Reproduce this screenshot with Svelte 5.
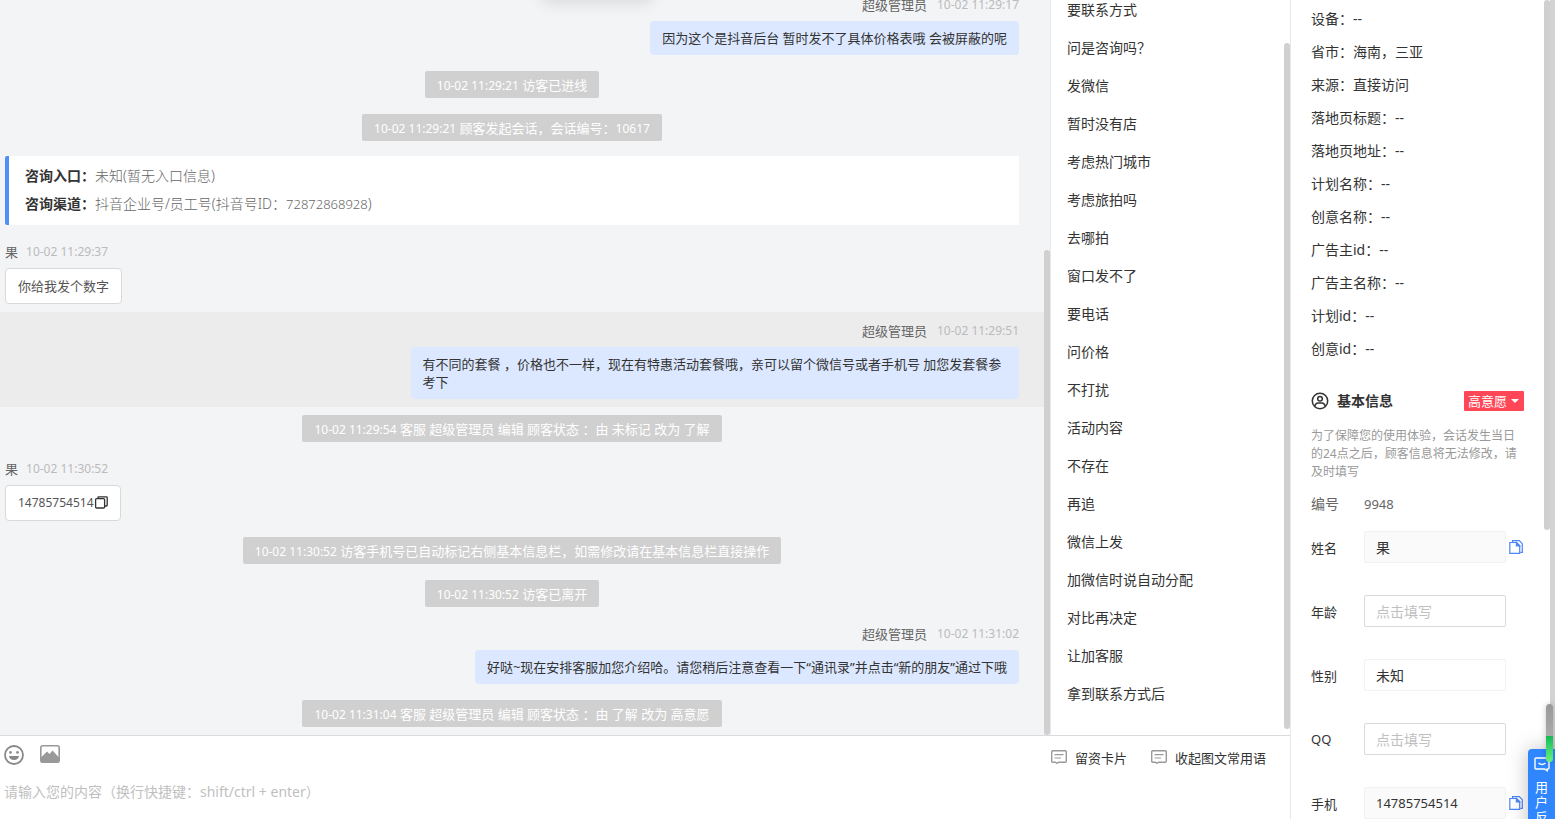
<script>
    const messages = [
        {type: 'service', name: '超级管理员', time: '10-02 11:29:17', text: '因为这个是抖音后台 暂时发不了具体价格表哦 会被屏蔽的呢'},
        {type: 'tip', time: '10-02 11:29:21', text: '访客已进线'},
        {type: 'tip', time: '10-02 11:29:21', text: '顾客发起会话，会话编号：', num: '10617'},
        {type: 'entry'},
        {type: 'visitor', name: '果', time: '10-02 11:29:37', text: '你给我发个数字'},
        {type: 'service', name: '超级管理员', time: '10-02 11:29:51', text: '有不同的套餐 ，价格也不一样，现在有特惠活动套餐哦，亲可以留个微信号或者手机号 加您发套餐参考下', active: true},
        {type: 'tip', time: '10-02 11:29:54', text: '客服 超级管理员 编辑 顾客状态 ：由 未标记 改为 了解'},
        {type: 'visitor', name: '果', time: '10-02 11:30:52', phone: '14785754514'},
        {type: 'tip', time: '10-02 11:30:52', text: '访客手机号已自动标记右侧基本信息栏，如需修改请在基本信息栏直接操作'},
        {type: 'tip', time: '10-02 11:30:52', text: '访客已离开'},
        {type: 'service', name: '超级管理员', time: '10-02 11:31:02', text: '好哒~现在安排客服加您介绍哈。请您稍后注意查看一下“通讯录”并点击“新的朋友”通过下哦'},
        {type: 'tip', time: '10-02 11:31:04', text: '客服 超级管理员 编辑 顾客状态 ：由 了解 改为 高意愿'}
    ];

    const phrases = [
        '要联系方式', '问是咨询吗？', '发微信', '暂时没有店', '考虑热门城市', '考虑旅拍吗', '去哪拍',
        '窗口发不了', '要电话', '问价格', '不打扰', '活动内容', '不存在', '再追', '微信上发',
        '加微信时说自动分配', '对比再决定', '让加客服', '拿到联系方式后'
    ];

    const details = [
        ['设备', '--'],
        ['省市', '海南，三亚'],
        ['来源', '直接访问'],
        ['落地页标题', '--'],
        ['落地页地址', '--'],
        ['计划名称', '--'],
        ['创意名称', '--'],
        ['广告主id', '--'],
        ['广告主名称', '--'],
        ['计划id', '--'],
        ['创意id', '--']
    ];

    let draft = $state('');
    let fields = $state([
        {id: 'name', label: '姓名', value: '果', filled: true},
        {id: 'age', label: '年龄', value: ''},
        {id: 'gender', label: '性别', value: '未知', options: ['未知', '男', '女']},
        {id: 'qq', label: 'QQ', value: ''},
        {id: 'phone', label: '手机', value: '14785754514', filled: true}
    ]);
</script>

{#snippet cardIcon()}
    <svg width="16" height="14" viewBox="0 0 16 14" fill="none" stroke="#999" stroke-width="1.4">
        <path d="M1.7.8h12.6q1 0 1 1v9.4q0 1-1 1H7.6L6 13.3l-1.6-1.1H1.7q-1 0-1-1V1.8q0-1 1-1z" />
        <path d="M3.5 4.7h9M3.5 8h6.500" stroke-width="1.2" />
    </svg>
{/snippet}

<div class="page">
    <main class="workspace">
        <div class="upper">
            <section class="chat">
                <div class="dropped"></div>
                {#each messages as msg}
                    <div class="item {msg.type}" class:active={msg.active}>
                        {#if msg.type === 'tip'}
                            <div class="pill"><span class="num">{msg.time}</span> {msg.text}<span class="num">{msg.num ?? ''}</span></div>
                        {:else if msg.type === 'entry'}
                            <div class="card">
                                <p><b>咨询入口：</b>未知(暂无入口信息)</p>
                                <p><b>咨询渠道：</b>抖音企业号/员工号(抖音号ID：<span class="id">72872868928</span>)</p>
                            </div>
                        {:else}
                            <div class="meta"><span>{msg.name}</span><time class="num">{msg.time}</time></div>
                            <div class="bubble">
                                {#if msg.phone}
                                    <span class="num">{msg.phone}</span><button class="copy" aria-label="复制">
                                        <svg width="14" height="14" viewBox="0 0 14 14" fill="none" stroke="#333" stroke-width="1.3">
                                            <rect x="1.6" y="2.6" width="9" height="9.4" rx="1" />
                                            <path d="M4 2.500V1.400q0-.6.6-.6h7.800q.8 0 .8.8v7.600q0 .8-.8.8h-1.600" />
                                        </svg>
                                    </button>
                                {:else}
                                    {msg.text}
                                {/if}
                            </div>
                        {/if}
                    </div>
                {/each}
                <div class="thumb chat-thumb"></div>
            </section>

            <section class="phrases">
                <ul>
                    {#each phrases as phrase}
                        <li><button>{phrase}</button></li>
                    {/each}
                </ul>
                <div class="thumb phrase-thumb"></div>
            </section>
        </div>

        <div class="composer">
            <div class="toolbar">
                <div class="tools">
                    <button aria-label="表情">
                        <svg width="20" height="20" viewBox="0 0 20 20">
                            <circle cx="10" cy="10" r="9" fill="none" stroke="#888" stroke-width="1.8" />
                            <circle cx="6.5" cy="7.4" r="1.3" fill="#888" />
                            <circle cx="13.5" cy="7.4" r="1.3" fill="#888" />
                            <path d="M5 11h10q-.6 4-5 4t-5-4z" fill="#888" />
                        </svg>
                    </button>
                    <button aria-label="图片">
                        <svg width="20" height="20" viewBox="0 0 20 20">
                            <rect x=".8" y=".8" width="18.400" height="16.400" rx="2" fill="none" stroke="#999" stroke-width="1.6" />
                            <path d="M1 12.500l6-6 2.500 2.500L12.500 5.500 19 12.500V17H1z" fill="#999" />
                        </svg>
                    </button>
                </div>
                <div class="actions">
                    <button>{@render cardIcon()}留资卡片</button>
                    <button>{@render cardIcon()}收起图文常用语</button>
                </div>
            </div>
            <textarea bind:value={draft} aria-label="消息" placeholder="请输入您的内容（换行快捷键：shift/ctrl + enter）"></textarea>
        </div>
    </main>

    <aside class="info">
        <ul class="details">
            {#each details as [label, value]}
                <li>{label}：{value}</li>
            {/each}
        </ul>

        <header>
            <svg width="18" height="18" viewBox="0 0 18 18" fill="none" stroke="#333" stroke-width="1.5">
                <circle cx="9" cy="9" r="7.7" />
                <circle cx="9" cy="6.8" r="2.3" />
                <path d="M3.6 14.2q1.2-3.2 3.4-3.2h4q2.2 0 3.4 3.2" />
            </svg>
            <h2>基本信息</h2>
            <button class="level">高意愿<i></i></button>
        </header>
        <p class="note">为了保障您的使用体验，会话发生当日的24点之后，顾客信息将无法修改，请及时填写</p>
        <div class="number"><span>编号</span><span class="id">9948</span></div>

        <form>
            {#each fields as field}
                <div class="field">
                    <label for={field.id}>{field.label}</label>
                    {#if field.options}
                        <select id={field.id} bind:value={field.value}>
                            {#each field.options as option}
                                <option>{option}</option>
                            {/each}
                        </select>
                    {:else}
                        <input id={field.id} class:filled={field.filled} bind:value={field.value} placeholder="点击填写" />
                    {/if}
                    {#if field.filled}
                        <button type="button" class="copy" aria-label="复制{field.label}">
                            <svg width="14" height="14" viewBox="0 0 14 14" fill="none" stroke="#4a86f7" stroke-width="1.2">
                                <path d="M3.5 2.3V.7h6.800l3 3v8.600h-2" />
                                <path d="M.8 2.5h6.700l3.200 3.200v7.600H.8z" />
                                <path d="M7.4 2.5v3.300h3.300z" fill="#4a86f7" />
                            </svg>
                        </button>
                    {/if}
                </div>
            {/each}
        </form>
        <div class="thumb info-thumb"></div>
        <div class="rail"></div>
    </aside>

    <button class="feedback">
        <svg width="16" height="15" viewBox="0 0 16 15" fill="none" stroke="#fff" stroke-width="1.4">
            <path d="M2 1h12q1 0 1 1v9q0 1-1 1h-.8v1.800L10.500 12H2q-1 0-1-1V2q0-1 1-1z" />
            <path d="M4.500 6q3.500 3.200 7 0" />
        </svg>
        <span>用户反馈</span>
    </button>
    <div class="meter"></div>
</div>

<style>
    :global(body) {
        overflow: hidden;
        font-family: "Noto Sans", "Noto Sans CJK SC", sans-serif;
        font-size: 14px;
        color: #333;
    }
    .page {
        display: flex;
        position: relative;
        height: 100vh;
        overflow: hidden;
        background: #fff;
    }
    ul, p, h2 {
        margin: 0;
        padding: 0;
        list-style: none;
    }
    button {
        padding: 0;
        border: 0;
        background: none;
        font: inherit;
        color: inherit;
        cursor: pointer;
    }
    svg {
        display: block;
        flex: none;
    }
    .workspace {
        display: flex;
        flex: 1;
        flex-direction: column;
        min-width: 0;
    }
    .upper {
        display: flex;
        flex: 1;
        min-height: 0;
    }
    .thumb {
        position: absolute;
        right: 0;
        width: 6px;
        border-radius: 3px;
        background: #d0d0d0;
    }

    /* conversation */
    .chat {
        display: flex;
        flex: 1;
        flex-direction: column;
        justify-content: flex-end;
        position: relative;
        overflow: hidden;
        background: #f3f4f6;
        font-size: 13px;
        line-height: 18px;
    }
    .dropped {
        position: absolute;
        top: -40px;
        left: 50%;
        width: 110px;
        height: 40px;
        margin-left: 17px;
        box-shadow: 0 2px 16px rgba(0, 0, 0, 0.12);
    }
    .chat-thumb {
        top: 34%;
        bottom: 0;
    }
    .item {
        display: flex;
        flex: none;
        flex-direction: column;
        align-items: flex-start;
        padding: 8px 31px 8px 5px;
    }
    .service {
        align-items: flex-end;
    }
    .tip {
        align-items: center;
    }
    .entry {
        align-items: stretch;
        padding-top: 7px;
    }
    .active {
        background: #ececec;
    }
    .num {
        font-size: 12px;
    }
    .id {
        font-size: 13px;
    }
    .pill {
        padding: 5px 12px 4px;
        border-radius: 2px;
        background: #d0d0d0;
        color: #fff;
    }
    .pill .num {
        line-height: 1;
    }
    .card {
        padding: 6px 16px 7px;
        border-left: 4px solid #4f8ff9;
        border-radius: 2px 0 0 2px;
        background: #fff;
        color: #666;
        font-size: 14px;
        font-weight: 300;
        line-height: 28px;
    }
    .card .id {
        line-height: 1;
    }
    .card b {
        color: #333;
        font-weight: 700;
    }
    .meta {
        display: flex;
        gap: 10px;
        margin-bottom: 5px;
        color: #666;
        line-height: 22px;
    }
    .visitor .meta {
        gap: 8px;
    }
    .meta time {
        color: #bbb;
    }
    .bubble {
        display: flex;
        align-items: center;
        box-sizing: border-box;
        max-width: 60%;
        padding: 8px 12px;
        border-radius: 4px;
        background: #dce8ff;
    }
    .visitor .bubble {
        border: 1px solid #d9d9d9;
        background: #fff;
        color: #555;
    }

    /* quick phrases */
    .phrases {
        display: flex;
        flex: none;
        flex-direction: column;
        justify-content: flex-end;
        position: relative;
        box-sizing: border-box;
        width: 240px;
        padding: 0 16px 22px;
        overflow: hidden;
        border-left: 1px solid #e8e8e8;
    }
    .phrases li {
        line-height: 38px;
    }
    .phrases button {
        display: block;
        width: 100%;
        text-align: left;
    }
    .phrase-thumb {
        top: 43px;
        bottom: 6px;
    }

    /* composer */
    .composer {
        flex: none;
        border-top: 1px solid #d9dbde;
    }
    .toolbar {
        display: flex;
        justify-content: space-between;
        align-items: flex-start;
        height: 44px;
        padding: 0 24px 0 4px;
    }
    .tools {
        display: flex;
        align-items: center;
        gap: 16px;
        height: 38px;
    }
    .actions {
        display: flex;
        align-items: center;
        gap: 24px;
        height: 42px;
        font-size: 13px;
    }
    .actions button {
        display: flex;
        align-items: center;
        gap: 8px;
    }
    textarea {
        display: block;
        box-sizing: border-box;
        width: 100%;
        height: 39px;
        padding: 1px 4px;
        border: 0;
        outline: 0;
        resize: none;
        font: inherit;
        line-height: 22px;
    }
    textarea::placeholder, input::placeholder {
        color: #bfbfbf;
        opacity: 1;
    }

    /* customer info */
    .info {
        flex: none;
        position: relative;
        box-sizing: border-box;
        width: 265px;
        padding: 2px 31px 0 20px;
        overflow: hidden;
        border-left: 1px solid #e8e8e8;
    }
    .details li {
        line-height: 33px;
    }
    header {
        display: flex;
        align-items: center;
        margin-top: 25px;
        line-height: 22px;
    }
    h2 {
        flex: 1;
        margin-left: 8px;
        font-size: 14px;
        font-weight: 600;
    }
    .level {
        display: flex;
        align-items: center;
        gap: 4px;
        padding: 0 5px 0 4px;
        border-radius: 1px;
        background: #ff4757;
        color: #fff;
        font-size: 13px;
        line-height: 20px;
    }
    .level i {
        border: 4px solid transparent;
        border-top-color: #fff;
        border-bottom: 0;
    }
    .note {
        margin-top: 15px;
        color: #999;
        font-size: 12px;
        line-height: 18px;
    }
    .number {
        display: flex;
        margin: 12px 0 16px;
        color: #666;
        line-height: 22px;
    }
    .number span:first-child {
        width: 53px;
    }
    form {
        display: flex;
        flex-direction: column;
        gap: 32px;
    }
    .field {
        display: flex;
        align-items: center;
        height: 32px;
    }
    label {
        flex: none;
        width: 53px;
        font-size: 13px;
    }
    input, select {
        appearance: none;
        box-sizing: border-box;
        width: 142px;
        height: 32px;
        padding: 0 11px;
        border: 1px solid #d9d9d9;
        border-radius: 2px;
        outline: 0;
        background: #fff;
        color: #333;
        font: inherit;
    }
    select, .filled {
        border-color: #f2f2f2;
    }
    .filled {
        background: #fafafa;
    }
    #phone {
        font-size: 13px;
    }
    .field .copy {
        margin-left: 3px;
    }
    .info-thumb {
        top: 0;
        right: 5px;
        height: 530px;
    }
    .rail {
        position: absolute;
        top: 0;
        right: 0;
        bottom: 0;
        width: 5px;
        background: #d3d3d3;
    }

    /* floating feedback tab */
    .feedback {
        display: flex;
        flex-direction: column;
        align-items: center;
        gap: 8px;
        position: absolute;
        right: 0;
        bottom: -34px;
        width: 27px;
        height: 104px;
        padding-top: 8px;
        border-radius: 4px 0 0 4px;
        background: #2f86ff;
        box-shadow: 0 0 20px rgba(0, 0, 0, 0.25);
        color: #fff;
        font-size: 13px;
        line-height: 15px;
    }
    .feedback span {
        width: 13px;
    }
    .meter {
        position: absolute;
        right: 2px;
        bottom: 57px;
        width: 7px;
        height: 58px;
        border-radius: 4px;
        background: linear-gradient(#999 0, #aaa 32px, #17b856 32px, #2dcc68 40px, #6cf07c 100%);
        box-shadow: 0 0 6px rgba(0, 0, 0, 0.2);
    }
</style>
